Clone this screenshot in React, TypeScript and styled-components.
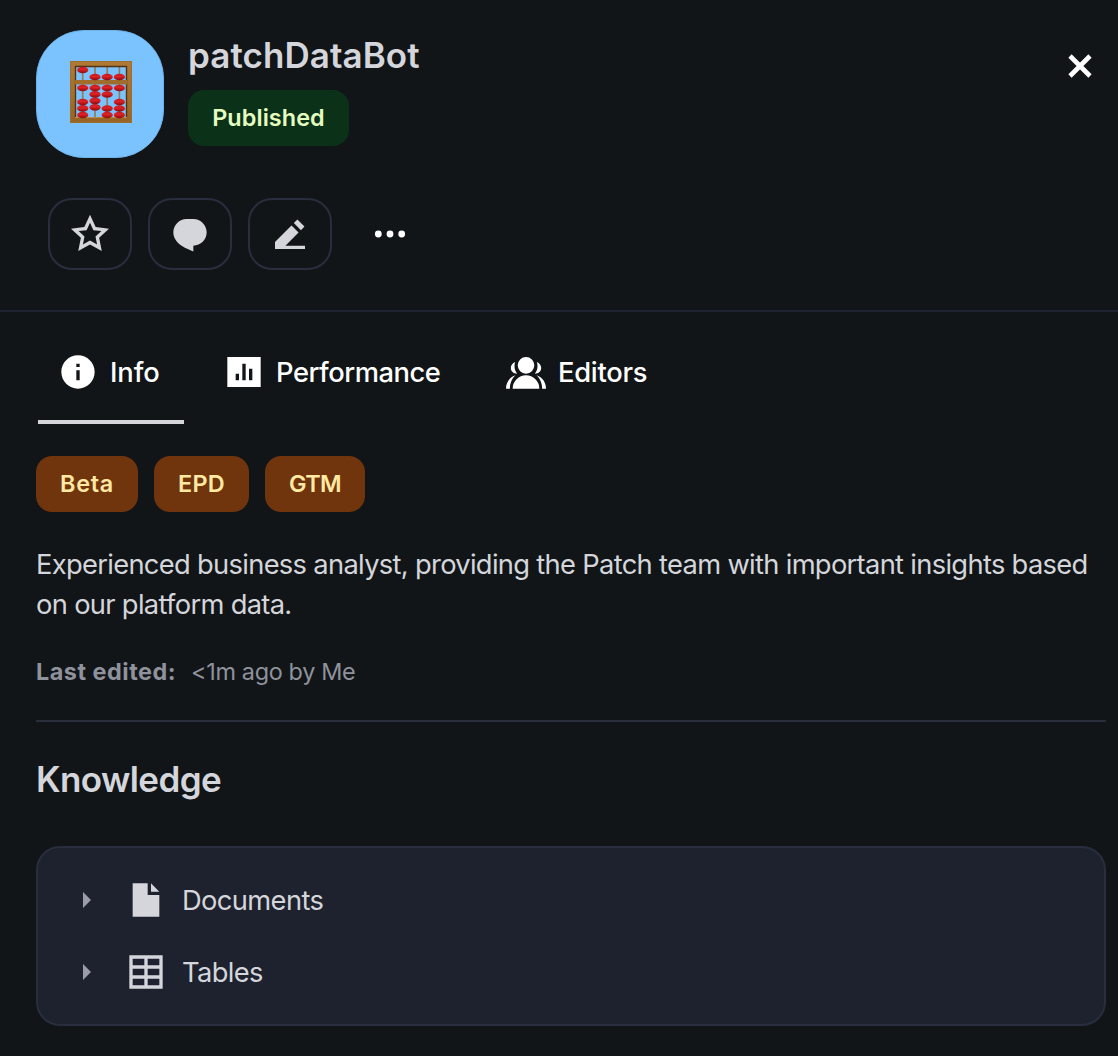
import React from "react";
import styled, { createGlobalStyle } from "styled-components";

const Global = createGlobalStyle`
  * { box-sizing: border-box; }
  body {
    margin: 0;
    background: #111518;
    color: #d4d6db;
    font-family: Inter, "Liberation Sans", sans-serif;
    overflow: hidden;
  }
  button { font: inherit; color: inherit; background: none; border: 0; padding: 0; }
`;

const Panel = styled.main`
  width: 1118px;
  height: 1056px;
  display: flex;
  flex-direction: column;
`;

const Header = styled.header`
  height: 312px;
  padding: 30px 20px 0 36px;
  border-bottom: 2px solid #1f2433;
`;

const Identity = styled.div`
  display: flex;
  align-items: flex-start;
`;

const Avatar = styled.div`
  width: 128px;
  height: 128px;
  border-radius: 48px;
  background: #7ac3ff;
  border: 1px solid #70b2e8;
  display: flex;
  align-items: center;
  justify-content: center;
  padding: 0 0 4px 2px;
`;

const Naming = styled.div`
  flex: 1;
  margin-left: 24px;
  display: flex;
  flex-direction: column;
  align-items: flex-start;
`;

const Title = styled.h1`
  margin: 0 0 10px;
  font-size: 35px;
  line-height: 50px;
  font-weight: 600;
  letter-spacing: 0.06px;
`;

const Close = styled.button`
  width: 36px;
  height: 36px;
  margin-top: 18px;
  display: flex;
  align-items: center;
  justify-content: center;
  color: #fff;
`;

const Badge = styled.span<{ $green?: boolean; $width: number; $spacing?: number }>`
  width: ${(p) => p.$width}px;
  height: 56px;
  padding-bottom: 2px;
  border-radius: 16px;
  display: flex;
  align-items: center;
  justify-content: center;
  font-size: 23.4px;
  font-weight: 600;
  letter-spacing: ${(p) => p.$spacing ?? 0}px;
  background: ${(p) => (p.$green ? "#0b3218" : "#70350d")};
  color: ${(p) => (p.$green ? "#e5fcc0" : "#ffe9a3")};
`;

const Actions = styled.div`
  display: flex;
  gap: 16px;
  margin: 40px 0 0 12px;
`;

const Action = styled.button<{ $bare?: boolean }>`
  width: 84px;
  height: 72px;
  border: 2px solid ${(p) => (p.$bare ? "transparent" : "#292e3e")};
  border-radius: 24px;
  display: flex;
  align-items: center;
  justify-content: center;
  color: ${(p) => (p.$bare ? "#fff" : "#d4d6db")};
`;

const Tabs = styled.nav`
  display: flex;
  gap: 20px;
  height: 112px;
  padding-left: 38px;
`;

const Tab = styled.button<{ $active?: boolean; $width: number; $spacing: number }>`
  width: ${(p) => p.$width}px;
  height: 112px;
  border-bottom: 4px solid ${(p) => (p.$active ? "#d4d6db" : "transparent")};
  display: flex;
  align-items: center;
  gap: 12px;
  padding: 12px 0 0 20px;
  color: #fff;
  font-size: 27.3px;
  font-weight: 550;
  letter-spacing: ${(p) => p.$spacing}px;
  white-space: nowrap;
`;

const Body = styled.section`
  padding: 32px 12px 0 36px;
`;

const Tags = styled.div`
  display: flex;
  gap: 16px;
`;

const Description = styled.p`
  margin: 33px 0 0;
  font-size: 27.3px;
  line-height: 40px;
  letter-spacing: -0.68px;
  white-space: nowrap;
`;

const Edited = styled.div`
  display: flex;
  gap: 15px;
  margin-top: 26px;
  height: 40px;
  align-items: center;
  font-size: 23.4px;
  color: #8f929c;
  b { font-weight: 700; letter-spacing: 0.52px; }
  span { letter-spacing: -0.33px; }
`;

const Divider = styled.hr`
  height: 2px;
  border: 0;
  margin: 29px 0 0;
  background: #292e3d;
`;

const Heading = styled.h2`
  margin: 31px 0 41px;
  font-size: 35px;
  line-height: 52px;
  font-weight: 600;
  letter-spacing: -0.6px;
`;

const Card = styled.div`
  height: 180px;
  padding: 16px 0 0 28px;
  border: 2px solid #292e3e;
  border-radius: 24px;
  background: #1e222e;
`;

const Item = styled.div`
  height: 72px;
  display: flex;
  align-items: center;
  font-size: 27.3px;
  letter-spacing: -0.62px;
`;

const Caret = styled.span`
  width: 0;
  border-style: solid;
  border-width: 8px 0 8px 8px;
  border-color: transparent transparent transparent #9a9da7;
  margin: 0 35px 0 17px;
`;

const ItemLabel = styled.span`
  margin-left: 16px;
`;

const Icon = ({ d, size = 40 }: { d: string; size?: number }) => (
  <svg width={size} height={size} viewBox="0 0 24 24" fill="currentColor" fillRule="evenodd">
    <path d={d} />
  </svg>
);

const icons = {
  star: "M12.0006 18.26L4.94715 22.2082L6.52248 14.2799L0.587891 8.7918L8.61493 7.84006L12.0006 0.5L15.3862 7.84006L23.4132 8.7918L17.4787 14.2799L19.054 22.2082L12.0006 18.26ZM12.0006 15.968L16.2473 18.3451L15.2988 13.5717L18.8719 10.2674L14.039 9.69434L12.0006 5.27502L9.96214 9.69434L5.12921 10.2674L8.70231 13.5717L7.75383 18.3451L12.0006 15.968Z",
  chat: "M10 3H14C18.4183 3 22 6.58172 22 11C22 15.4183 18.4183 19 14 19V22.5C9 20.5 2 17.5 2 11C2 6.58172 5.58172 3 10 3Z",
  edit: "M9.2426 19H21V21H3V16.7574L12.8995 6.8579L17.1421 11.1005ZM14.3137 5.4437L16.435 3.3223L20.6777 7.565L18.5563 9.6863Z",
  info: "M12 22C6.47715 22 2 17.5228 2 12C2 6.47715 6.47715 2 12 2C17.5228 2 22 6.47715 22 12C22 17.5228 17.5228 22 12 22ZM11 11V17H13V11ZM11 7V9H13V7Z",
  chart: "M2 3H22V21H2ZM7 13V17H9V13ZM11 7V17H13V7ZM15 10V17H17V10Z",
  people: "M12 3A5 5 0 1 1 12 13A5 5 0 0 1 12 3ZM4 22A8 8 0 0 1 20 22ZM5.6 14C2.2 15.2 0 18.3 0 22H2.3C2.3 18.8 3.5 16.1 5.6 14ZM18.4 14C21.8 15.2 24 18.3 24 22H21.7C21.7 18.8 20.5 16.1 18.4 14ZM5.5 6C3.9 6.7 2.9 8 2.9 9.6C2.9 11.5 4.4 12.9 6.7 13.1C5.7 11.8 5.1 10.4 5.1 8.6C5.1 7.7 5.2 6.8 5.5 6ZM18.5 6C20.1 6.7 21.1 8 21.1 9.6C21.1 11.5 19.6 12.9 17.3 13.1C18.3 11.8 18.9 10.4 18.9 8.6C18.9 7.7 18.8 6.8 18.5 6Z",
  file: "M4 2H13V9H20V22H4ZM15 2L20 7H15Z",
  table: "M2 2H22V22H2ZM4 4V8H11V4ZM13 4V8H20V4ZM4 10V14H11V10ZM13 10V14H20V10ZM4 16V20H11V16ZM13 16V20H20V16Z",
};

const beads: [number, number][] = [
  [12.7, 9], [25, 16], [37.2, 16], [49.4, 16],
  [12.7, 27], [12.7, 41], [12.7, 47.4], [12.7, 54],
  [25, 27], [25, 33.4], [25, 39.8], [25, 46.3],
  [37.2, 27], [37.2, 33.5], [37.2, 47.5], [37.2, 54],
  [49.4, 27], [49.4, 41], [49.4, 47.5], [49.4, 54],
];

const Abacus = () => (
  <svg width="62" height="62" viewBox="0 0 62 62">
    <defs>
      <linearGradient id="wood" x2="0" y2="1">
        <stop stopColor="#b07a38" />
        <stop offset="1" stopColor="#976425" />
      </linearGradient>
      <linearGradient id="bead" x2="0" y2="1">
        <stop stopColor="#c01a1c" />
        <stop offset=".4" stopColor="#e02226" />
        <stop offset="1" stopColor="#8a0a0c" />
      </linearGradient>
    </defs>
    {[12.7, 25, 37.2, 49.4].map((x) => (
      <path key={x} d={`M${x} 5V57`} stroke="#96795c" strokeWidth="1.7" />
    ))}
    <path d="M0 0H62V62H0ZM5 5V57H57V5Z" fillRule="evenodd" fill="url(#wood)" />
    <path d="M.5 .5H61.5V61.5H.5Z" fill="none" stroke="#a06d2d" />
    <path d="M5 5.5H57M5.5 5V57M56.5 5V57" fill="none" stroke="#54330f" strokeWidth="1.4" />
    <path d="M5 56.5H57" stroke="#c08b45" />
    <path d="M5 19H57V23.5H5Z" fill="#a06d2d" />
    {beads.map(([x, y], i) => (
      <ellipse key={i} cx={x} cy={y} rx="5.6" ry="3.3" fill="url(#bead)" />
    ))}
  </svg>
);

export default function App() {
  return (
    <>
      <Global />
      <Panel>
        <Header>
          <Identity>
            <Avatar><Abacus /></Avatar>
            <Naming>
              <Title>patchDataBot</Title>
              <Badge $green $width={161} $spacing={0.08}>Published</Badge>
            </Naming>
            <Close aria-label="Close">
              <svg width="26" height="26" viewBox="0 0 26 26" stroke="currentColor" strokeWidth="4.6">
                <path d="M3 3L23 23M23 3L3 23" />
              </svg>
            </Close>
          </Identity>
          <Actions>
            <Action aria-label="Favorite"><Icon d={icons.star} /></Action>
            <Action aria-label="Chat"><Icon d={icons.chat} /></Action>
            <Action aria-label="Edit"><Icon d={icons.edit} /></Action>
            <Action $bare aria-label="More">
              <svg width="32" height="8" viewBox="0 0 32 8" fill="currentColor">
                <circle cx="4.3" cy="4" r="3.4" />
                <circle cx="16" cy="4" r="3.4" />
                <circle cx="27.7" cy="4" r="3.4" />
              </svg>
            </Action>
          </Actions>
        </Header>
        <Tabs>
          <Tab $active $width={146} $spacing={-0.1}><Icon d={icons.info} />Info</Tab>
          <Tab $width={262} $spacing={-0.45}><Icon d={icons.chart} />Performance</Tab>
          <Tab $width={190} $spacing={-0.25}><Icon d={icons.people} />Editors</Tab>
        </Tabs>
        <Body>
          <Tags>
            <Badge $width={102} $spacing={0.7}>Beta</Badge>
            <Badge $width={95} $spacing={0.3}>EPD</Badge>
            <Badge $width={100} $spacing={-0.6}>GTM</Badge>
          </Tags>
          <Description>
            Experienced business analyst, providing the Patch team with important insights based
            <br />
            on our platform data.
          </Description>
          <Edited><b>Last edited:</b><span>&lt;1m ago by Me</span></Edited>
          <Divider />
          <Heading>Knowledge</Heading>
          <Card>
            <Item><Caret /><Icon d={icons.file} /><ItemLabel>Documents</ItemLabel></Item>
            <Item><Caret /><Icon d={icons.table} /><ItemLabel>Tables</ItemLabel></Item>
          </Card>
        </Body>
      </Panel>
    </>
  );
}
